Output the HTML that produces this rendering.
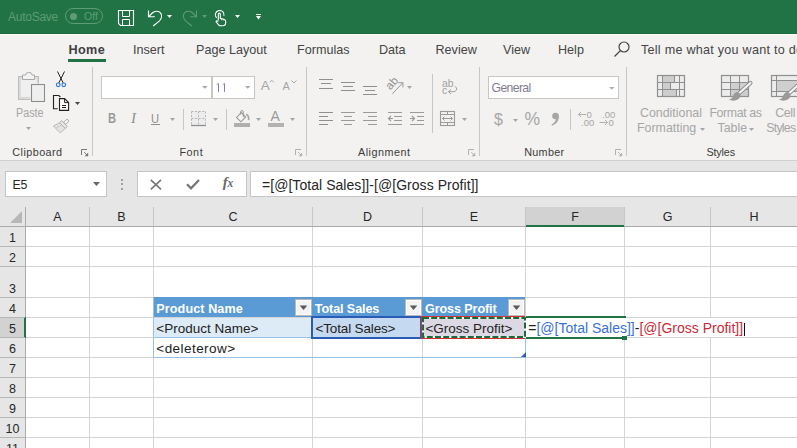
<!DOCTYPE html>
<html><head><meta charset="utf-8"><style>
html,body{margin:0;padding:0;width:797px;height:448px;overflow:hidden;background:#fff}
body{position:relative;font-family:'Liberation Sans', sans-serif}
.t{position:absolute;white-space:nowrap;font-family:'Liberation Sans', sans-serif}
svg{overflow:visible}
</style></head><body>
<div style="position:absolute;left:0px;top:0px;width:797px;height:33px;background:#217346"></div>
<div style="position:absolute;left:0px;top:33px;width:797px;height:1px;background:#1d6a3f"></div>
<div style="position:absolute;left:0px;top:34px;width:797px;height:1px;background:#fbfbfa"></div>
<div class="t" style="left:8px;top:10.84px;font-size:12px;line-height:12px;color:#5f9b75;font-weight:normal;letter-spacing:-0.25px;">AutoSave</div>
<div style="position:absolute;left:65px;top:8px;width:38px;height:16px;border:1px solid #5f9b75;border-radius:9px;box-sizing:border-box"></div>
<div style="position:absolute;left:69.5px;top:12.7px;width:7px;height:7px;border-radius:50%;background:#5f9b75"></div>
<div class="t" style="left:84px;top:10.91px;font-size:10.5px;line-height:10.5px;color:#5f9b75;font-weight:normal;letter-spacing:0px;">Off</div>
<svg style="position:absolute;left:117px;top:9px;" width="18" height="18" viewBox="0 0 18 18"><path d="M1.5 1.5H16.5V16.5H3.5L1.5 14.5Z" fill="none" stroke="#fff" stroke-width="1.1"/><path d="M5.5 1.5V7.5H12.5V1.5" fill="none" stroke="#fff" stroke-width="1"/><path d="M5.5 16.5V10.5H12.5V16.5" fill="none" stroke="#fff" stroke-width="1"/></svg>
<svg style="position:absolute;left:146px;top:9px;" width="18" height="18" viewBox="0 0 18 18"><path d="M2.5 1.5V7.8H8.8" fill="none" stroke="#fff" stroke-width="1.1"/><path d="M2.5 7.8L6.2 4Q9 1.4 12.5 2.6Q16 4.2 15.5 8Q15.2 10 13.5 11.8L7.2 17" fill="none" stroke="#fff" stroke-width="1.1"/></svg>
<svg style="position:absolute;left:167.0px;top:15px;" width="5" height="3" viewBox="0 0 5 3"><path d="M0 0H5L2.5 3Z" fill="#fff"/></svg>
<svg style="position:absolute;left:181px;top:9px;" width="18" height="18" viewBox="0 0 18 18"><path d="M15.5 1.5V7.8H9.2" fill="none" stroke="#5f9b75" stroke-width="1.1"/><path d="M15.5 7.8L11.8 4Q9 1.4 5.5 2.6Q2 4.2 2.5 8Q2.8 10 4.5 11.8L10.8 17" fill="none" stroke="#5f9b75" stroke-width="1.1"/></svg>
<svg style="position:absolute;left:202.0px;top:15px;" width="5" height="3" viewBox="0 0 5 3"><path d="M0 0H5L2.5 3Z" fill="#5f9b75"/></svg>
<svg style="position:absolute;left:213px;top:9px;" width="16" height="18" viewBox="0 0 16 18"><path d="M3.6 8.9A4.35 4.35 0 1 1 10.9 6.9" fill="none" stroke="#fff" stroke-width="1.1"/><path d="M5.3 11.5V5.3Q5.3 4.1 6.3 4.1Q7.3 4.1 7.3 5.3V9.3L10.8 10.2Q12.7 10.8 12.7 12.6V13.5Q12.7 16.8 9.5 16.8H7.8Q6.5 16.8 5.6 15.8L3.2 12.9Q2.8 12 3.8 11.8L5.3 12.6" fill="#217346" stroke="#fff" stroke-width="1.1"/><path d="M8.6 9.8V11.3M10.3 10.3V11.5" stroke="#fff" stroke-width="0.8"/></svg>
<svg style="position:absolute;left:235.0px;top:15px;" width="5" height="3" viewBox="0 0 5 3"><path d="M0 0H5L2.5 3Z" fill="#fff"/></svg>
<div style="position:absolute;left:256px;top:14px;width:5px;height:1px;background:#fff"></div>
<svg style="position:absolute;left:256.0px;top:16px;" width="5" height="3.5" viewBox="0 0 5 3.5"><path d="M0 0H5L2.5 3.5Z" fill="#fff"/></svg>
<div style="position:absolute;left:0px;top:35px;width:797px;height:125px;background:#f3f2f1"></div>
<div style="position:absolute;left:0px;top:160px;width:797px;height:1px;background:#d2d0ce"></div>
<div class="t" style="left:68.5px;top:43.93px;font-size:12.6px;line-height:12.6px;color:#3f3f3f;font-weight:bold;letter-spacing:0.4px;">Home</div>
<div class="t" style="left:133px;top:43.93px;font-size:12.6px;line-height:12.6px;color:#444;font-weight:normal;letter-spacing:0px;">Insert</div>
<div class="t" style="left:196px;top:43.93px;font-size:12.6px;line-height:12.6px;color:#444;font-weight:normal;letter-spacing:0px;">Page Layout</div>
<div class="t" style="left:297px;top:43.93px;font-size:12.6px;line-height:12.6px;color:#444;font-weight:normal;letter-spacing:0px;">Formulas</div>
<div class="t" style="left:379px;top:43.93px;font-size:12.6px;line-height:12.6px;color:#444;font-weight:normal;letter-spacing:0px;">Data</div>
<div class="t" style="left:435.5px;top:43.93px;font-size:12.6px;line-height:12.6px;color:#444;font-weight:normal;letter-spacing:0px;">Review</div>
<div class="t" style="left:503px;top:43.93px;font-size:12.6px;line-height:12.6px;color:#444;font-weight:normal;letter-spacing:0px;">View</div>
<div class="t" style="left:558px;top:43.93px;font-size:12.6px;line-height:12.6px;color:#444;font-weight:normal;letter-spacing:0px;">Help</div>
<div style="position:absolute;left:68px;top:59px;width:38px;height:3px;background:#217346"></div>
<svg style="position:absolute;left:612px;top:40px;" width="20" height="20" viewBox="0 0 20 20"><circle cx="12" cy="7" r="5" fill="none" stroke="#444" stroke-width="1.2"/><path d="M8.4 10.6L2.5 16.5" stroke="#444" stroke-width="1.3"/></svg>
<div class="t" style="left:641px;top:43.93px;font-size:12.6px;line-height:12.6px;color:#444;font-weight:normal;letter-spacing:0.25px;">Tell me what you want to do</div>
<div style="position:absolute;left:92px;top:67px;width:1px;height:89px;background:#c8c6c4"></div>
<div style="position:absolute;left:306px;top:67px;width:1px;height:89px;background:#c8c6c4"></div>
<div style="position:absolute;left:479px;top:67px;width:1px;height:89px;background:#c8c6c4"></div>
<div style="position:absolute;left:626px;top:67px;width:1px;height:89px;background:#c8c6c4"></div>
<div class="t" style="left:12.3px;top:146.76px;font-size:10.8px;line-height:10.8px;color:#3b3a39;font-weight:normal;letter-spacing:0.45px;">Clipboard</div>
<div class="t" style="left:179.4px;top:146.76px;font-size:10.8px;line-height:10.8px;color:#3b3a39;font-weight:normal;letter-spacing:0.55px;">Font</div>
<div class="t" style="left:358px;top:146.76px;font-size:10.8px;line-height:10.8px;color:#3b3a39;font-weight:normal;letter-spacing:0.5px;">Alignment</div>
<div class="t" style="left:524.2px;top:146.76px;font-size:10.8px;line-height:10.8px;color:#3b3a39;font-weight:normal;letter-spacing:0.3px;">Number</div>
<div class="t" style="left:706.4px;top:146.76px;font-size:10.8px;line-height:10.8px;color:#3b3a39;font-weight:normal;letter-spacing:-0.15px;">Styles</div>
<svg style="position:absolute;left:81px;top:149px;" width="8" height="8" viewBox="0 0 8 8"><path d="M0.5 6V0.5H6" fill="none" stroke="#777" stroke-width="1"/><path d="M3.2 3.2L6 6" stroke="#777" stroke-width="1"/><path d="M7.2 3.6V7.2H3.6Z" fill="#777"/></svg>
<svg style="position:absolute;left:294.5px;top:149px;" width="8" height="8" viewBox="0 0 8 8"><path d="M0.5 6V0.5H6" fill="none" stroke="#b0b0b0" stroke-width="1"/><path d="M3.2 3.2L6 6" stroke="#b0b0b0" stroke-width="1"/><path d="M7.2 3.6V7.2H3.6Z" fill="#b0b0b0"/></svg>
<svg style="position:absolute;left:467.5px;top:149px;" width="8" height="8" viewBox="0 0 8 8"><path d="M0.5 6V0.5H6" fill="none" stroke="#b0b0b0" stroke-width="1"/><path d="M3.2 3.2L6 6" stroke="#b0b0b0" stroke-width="1"/><path d="M7.2 3.6V7.2H3.6Z" fill="#b0b0b0"/></svg>
<svg style="position:absolute;left:614.5px;top:149px;" width="8" height="8" viewBox="0 0 8 8"><path d="M0.5 6V0.5H6" fill="none" stroke="#b0b0b0" stroke-width="1"/><path d="M3.2 3.2L6 6" stroke="#b0b0b0" stroke-width="1"/><path d="M7.2 3.6V7.2H3.6Z" fill="#b0b0b0"/></svg>
<svg style="position:absolute;left:17px;top:71px;" width="30" height="32" viewBox="0 0 30 32"><rect x="1.5" y="5.5" width="20" height="23" fill="#d9d9d9" stroke="#bdbdbd"/><rect x="3.7" y="7.5" width="15.9" height="18.4" fill="#efefef"/><path d="M5.5 8.5V4H8.6Q9 1.3 11.8 1.3Q14.6 1.3 15 4H17.5V8.5Z" fill="#f2f2f2" stroke="#a8a8a8"/><rect x="13.5" y="12.5" width="15" height="19" fill="#fafafa"/><rect x="14.5" y="13.5" width="13" height="17" fill="#efefef" stroke="#8c8c8c" stroke-width="1.1"/></svg>
<div class="t" style="left:15.8px;top:106.72px;font-size:12.5px;line-height:12.5px;color:#a6a6a6;font-weight:normal;letter-spacing:0px;transform:scaleX(0.86);transform-origin:0 0;">Paste</div>
<svg style="position:absolute;left:26.0px;top:127px;" width="5" height="3" viewBox="0 0 5 3"><path d="M0 0H5L2.5 3Z" fill="#a6a6a6"/></svg>
<svg style="position:absolute;left:55px;top:70px;" width="12" height="18" viewBox="0 0 12 18"><path d="M2.5 1.5L8.2 13M9.5 1.5L3.8 13" stroke="#222" stroke-width="1" fill="none"/><circle cx="3.2" cy="14.8" r="1.8" fill="none" stroke="#2b7cd3" stroke-width="1.2"/><circle cx="8.8" cy="14.8" r="1.8" fill="none" stroke="#2b7cd3" stroke-width="1.2"/></svg>
<svg style="position:absolute;left:52px;top:94px;" width="19" height="18" viewBox="0 0 19 18"><path d="M6.8 1.5H1.5V14.7H5.8M6.8 1.5L8.4 3.1" fill="none" stroke="#222" stroke-width="1.1"/><path d="M7.5 4.6H12.6L16.6 8.6V16.4H7.5Z" fill="#fff" stroke="#222" stroke-width="1.1"/><path d="M12.6 4.6V8.6H16.6" fill="none" stroke="#222" stroke-width="1"/><path d="M10 11.5H14M10 13.5H14" stroke="#222" stroke-width="1"/></svg>
<svg style="position:absolute;left:75.0px;top:102.2px;" width="5" height="3" viewBox="0 0 5 3"><path d="M0 0H5L2.5 3Z" fill="#444"/></svg>
<svg style="position:absolute;left:50px;top:116px;" width="22" height="20" viewBox="0 0 22 20"><g transform="translate(12.5 9.5) rotate(45)"><rect x="-1.5" y="-8" width="3" height="5.2" rx="1.5" fill="#f4f4f4" stroke="#a6a6a6" stroke-width="0.9"/><rect x="-4" y="-2.8" width="8" height="2.8" fill="#e8e8e8" stroke="#a6a6a6" stroke-width="0.9"/><path d="M-4 0.2H4L3.6 6.8L-6.1 6.8Z" fill="#e4e4e4" stroke="#b4b4b4" stroke-width="0.9"/><path d="M-1 0.5L-3 6.5" stroke="#c4c4c4" stroke-width="0.8"/></g></svg>
<div style="position:absolute;left:101px;top:76px;width:111px;height:23px;background:#fff;border:1px solid #c8c6c4;box-sizing:border-box"></div>
<div style="position:absolute;left:212px;top:76px;width:43px;height:23px;background:#fff;border:1px solid #c8c6c4;box-sizing:border-box"></div>
<svg style="position:absolute;left:201.85px;top:86.2px;" width="5.5" height="2.8" viewBox="0 0 5.5 2.8"><path d="M0 0H5.5L2.75 2.8Z" fill="#a6a6a6"/></svg>
<svg style="position:absolute;left:244.85px;top:86.2px;" width="5.5" height="2.8" viewBox="0 0 5.5 2.8"><path d="M0 0H5.5L2.75 2.8Z" fill="#a6a6a6"/></svg>
<svg style="position:absolute;left:214px;top:82px;" width="14" height="11" viewBox="0 0 14 11"><path d="M4.5 1.5V9.8M10.5 1.5V9.8" stroke="#9a78a6" stroke-width="1"/><path d="M2.5 2.8L4.5 1.3M8.5 2.8L10.5 1.3" stroke="#a08cb0" stroke-width="0.9"/></svg>
<div class="t" style="left:260.8px;top:79.37px;font-size:13.5px;line-height:13.5px;color:#a6a6a6;font-weight:normal;letter-spacing:0px;">A</div>
<svg style="position:absolute;left:269px;top:79px;" width="6" height="4" viewBox="0 0 6 4"><path d="M0.8 3.3L2.8 1.3L4.8 3.3" fill="none" stroke="#a6a6a6" stroke-width="1"/></svg>
<div class="t" style="left:282.5px;top:81.39px;font-size:11px;line-height:11px;color:#a6a6a6;font-weight:normal;letter-spacing:0px;">A</div>
<svg style="position:absolute;left:290.5px;top:79.5px;" width="6" height="4" viewBox="0 0 6 4"><path d="M0.5 0.5L3 3L5.5 0.5" fill="none" stroke="#a6a6a6" stroke-width="1"/></svg>
<div class="t" style="left:108.2px;top:111.15px;font-size:14px;line-height:14px;color:#999;font-weight:bold;letter-spacing:0px;transform:scaleX(0.8);transform-origin:0 0;">B</div>
<div class="t" style="left:131px;top:111.10px;font-size:15px;line-height:15px;color:#8f8f8f;font-weight:normal;letter-spacing:0px;font-family:'Liberation Serif';font-style:italic;">I</div>
<div class="t" style="left:151.2px;top:112.00px;font-size:13px;line-height:13px;color:#8f8f8f;font-weight:normal;letter-spacing:0px;transform:scaleX(0.86);transform-origin:0 0;">U</div>
<div style="position:absolute;left:150.7px;top:124px;width:9.5px;height:1px;background:#8f8f8f"></div>
<svg style="position:absolute;left:170.0px;top:118px;" width="5" height="3" viewBox="0 0 5 3"><path d="M0 0H5L2.5 3Z" fill="#a6a6a6"/></svg>
<div style="position:absolute;left:183px;top:109px;width:1px;height:21px;background:#c8c6c4"></div>
<svg style="position:absolute;left:190px;top:110px;" width="17" height="17" viewBox="0 0 17 17"><rect x="1.5" y="1.5" width="14" height="14" fill="#ededed"/><path d="M1.5 1.5H15.5M1.5 8.5H15.5M1.5 1.5V15M15.5 1.5V15M8.5 1.5V15" stroke="#b4b4b4" stroke-width="1" stroke-dasharray="2 1.6" fill="none"/><path d="M1 15.5H16" stroke="#8f8f8f" stroke-width="1.3"/></svg>
<svg style="position:absolute;left:213.0px;top:118.3px;" width="5" height="3" viewBox="0 0 5 3"><path d="M0 0H5L2.5 3Z" fill="#a6a6a6"/></svg>
<div style="position:absolute;left:226px;top:109px;width:1px;height:21px;background:#c8c6c4"></div>
<svg style="position:absolute;left:233px;top:109px;" width="19" height="18" viewBox="0 0 19 18"><path d="M3.5 8.4L7.9 12.8L12.7 8L8.3 3.6Z" fill="#f4f4f4" stroke="#9a9a9a" stroke-width="1.1"/><path d="M7.6 5.5V2.8Q7.6 1.6 8.9 1.6Q10.3 1.6 10.3 2.8V8.2" fill="none" stroke="#9a9a9a" stroke-width="1"/><path d="M13.2 5.2Q16.2 6.5 15.6 11.2" fill="none" stroke="#a4a4a4" stroke-width="1.6"/><rect x="1" y="14" width="16" height="4" fill="#b1aeac"/></svg>
<svg style="position:absolute;left:256.0px;top:118.3px;" width="5" height="3" viewBox="0 0 5 3"><path d="M0 0H5L2.5 3Z" fill="#a6a6a6"/></svg>
<div class="t" style="left:270.5px;top:109.15px;font-size:14px;line-height:14px;color:#9a9a9a;font-weight:normal;letter-spacing:0px;">A</div>
<div style="position:absolute;left:268px;top:123px;width:16px;height:4px;background:#b4b2b0"></div>
<svg style="position:absolute;left:290.0px;top:118.3px;" width="5" height="3" viewBox="0 0 5 3"><path d="M0 0H5L2.5 3Z" fill="#a6a6a6"/></svg>
<svg style="position:absolute;left:318px;top:77px;" width="16" height="20" viewBox="0 0 16 20"><path d="M1 2.5H15M3 6.5H13M1 11.5H15" stroke="#8f8f8f" stroke-width="1"/></svg>
<svg style="position:absolute;left:340px;top:80px;" width="16" height="20" viewBox="0 0 16 20"><path d="M1 2.5H15M3 6.5H13M1 10.5H15" stroke="#8f8f8f" stroke-width="1"/></svg>
<svg style="position:absolute;left:362px;top:84px;" width="16" height="20" viewBox="0 0 16 20"><path d="M1 2.5H15M3 6.5H13M1 10.5H15" stroke="#8f8f8f" stroke-width="1"/></svg>
<svg style="position:absolute;left:386px;top:77px;" width="20" height="18" viewBox="0 0 20 18"><text x="0" y="0" font-family="Liberation Sans" font-size="11.5" fill="#8f8f8f" transform="translate(4.6 13.6) rotate(-50)">ab</text><path d="M6.3 16.9L16.9 5.7M12.2 5.7H16.9V10.4" fill="none" stroke="#9a9a9a" stroke-width="1"/></svg>
<svg style="position:absolute;left:407.0px;top:85.8px;" width="5" height="3" viewBox="0 0 5 3"><path d="M0 0H5L2.5 3Z" fill="#a6a6a6"/></svg>
<svg style="position:absolute;left:318px;top:110px;" width="16" height="16" viewBox="0 0 16 16"><path d="M1 2.5H15M1 6.5H10M1 10.5H15M1 14.5H10" stroke="#8f8f8f" stroke-width="1"/></svg>
<svg style="position:absolute;left:340px;top:110px;" width="16" height="16" viewBox="0 0 16 16"><path d="M1 2.5H15M4 6.5H12M1 10.5H15M4 14.5H12" stroke="#9a9a9a" stroke-width="1.1"/></svg>
<svg style="position:absolute;left:362px;top:110px;" width="16" height="16" viewBox="0 0 16 16"><path d="M1 2.5H15M6 6.5H15M1 10.5H15M6 14.5H15" stroke="#9a9a9a" stroke-width="1.1"/></svg>
<svg style="position:absolute;left:387px;top:110px;" width="16" height="16" viewBox="0 0 16 16"><path d="M1 2.5H15M7 6.5H15M7 10.5H15M1 14.5H15M6 8.5H1.5M4 6L1.5 8.5L4 11" fill="none" stroke="#9a9a9a" stroke-width="1.1"/></svg>
<svg style="position:absolute;left:409px;top:110px;" width="16" height="16" viewBox="0 0 16 16"><path d="M1 2.5H15M8 6.5H15M8 10.5H15M1 14.5H15M1 8.5H5.5M3 6L5.5 8.5L3 11" fill="none" stroke="#9a9a9a" stroke-width="1.1"/></svg>
<div style="position:absolute;left:432px;top:74px;width:1px;height:59px;background:#c8c6c4"></div>
<svg style="position:absolute;left:441px;top:78px;" width="18" height="18" viewBox="0 0 18 18"><text x="1" y="8.6" font-family="Liberation Sans" font-size="10.5" fill="#a0a0a0">ab</text><text x="1" y="15.8" font-family="Liberation Sans" font-size="10.5" fill="#a0a0a0">c</text><path d="M14 8.3Q16.5 10 15.5 12Q14.5 13.7 12 13.7H7.5M10 11.3L7.5 13.7L10 16.1" fill="none" stroke="#a0a0a0" stroke-width="1"/></svg>
<svg style="position:absolute;left:439px;top:110px;" width="17" height="17" viewBox="0 0 17 17"><rect x="1.5" y="1.5" width="14" height="14" fill="none" stroke="#9a9a9a" stroke-width="1.1"/><path d="M1.5 4.5H15.5M1.5 12.5H15.5M8.5 1.5V4.5M8.5 12.5V15.5" stroke="#9a9a9a"/><path d="M3.5 8.5H13.5M5.5 6.5L3.5 8.5L5.5 10.5M11.5 6.5L13.5 8.5L11.5 10.5" fill="none" stroke="#9a9a9a"/></svg>
<svg style="position:absolute;left:462.0px;top:118.3px;" width="5" height="3" viewBox="0 0 5 3"><path d="M0 0H5L2.5 3Z" fill="#a6a6a6"/></svg>
<div style="position:absolute;left:488px;top:76px;width:131px;height:23px;background:#fff;border:1px solid #c8c6c4;box-sizing:border-box"></div>
<div class="t" style="left:491.6px;top:82.07px;font-size:12.2px;line-height:12.2px;color:#7f7d90;font-weight:normal;letter-spacing:-0.62px;">General</div>
<svg style="position:absolute;left:608.55px;top:87px;" width="5.5" height="2.8" viewBox="0 0 5.5 2.8"><path d="M0 0H5.5L2.75 2.8Z" fill="#b0b0b0"/></svg>
<div class="t" style="left:494px;top:111.96px;font-size:16px;line-height:16px;color:#a6a6a6;font-weight:normal;letter-spacing:0px;">$</div>
<svg style="position:absolute;left:513.0px;top:118.5px;" width="5" height="3" viewBox="0 0 5 3"><path d="M0 0H5L2.5 3Z" fill="#a6a6a6"/></svg>
<div class="t" style="left:524.5px;top:111.19px;font-size:17.5px;line-height:17.5px;color:#a6a6a6;font-weight:normal;letter-spacing:0px;">%</div>
<svg style="position:absolute;left:549px;top:110px;" width="14" height="18" viewBox="0 0 14 18"><circle cx="6.5" cy="6" r="3.3" fill="#a6a6a6"/><path d="M9.8 6Q10.4 12.5 3 15.8L2.4 14.8Q6.8 12 7 8.5Z" fill="#a6a6a6"/></svg>
<div style="position:absolute;left:570px;top:109px;width:1px;height:21px;background:#c8c6c4"></div>
<svg style="position:absolute;left:577px;top:110px;" width="18" height="17" viewBox="0 0 18 17"><text x="9.5" y="8" font-family="Liberation Sans" font-size="9.5" fill="#a6a6a6">0</text><text x="4" y="16.3" font-family="Liberation Sans" font-size="9.5" fill="#a6a6a6">.00</text><path d="M1.5 4.5H9M4 2L1.5 4.5L4 7" fill="none" stroke="#a6a6a6" stroke-width="0.9"/></svg>
<svg style="position:absolute;left:598px;top:110px;" width="18" height="17" viewBox="0 0 18 17"><text x="4" y="8" font-family="Liberation Sans" font-size="9.5" fill="#a6a6a6">.00</text><text x="10.5" y="16.3" font-family="Liberation Sans" font-size="9.5" fill="#a6a6a6">0</text><path d="M1.5 12.5H9.5M7 10L9.5 12.5L7 15" fill="none" stroke="#a6a6a6" stroke-width="0.9"/></svg>
<svg style="position:absolute;left:656px;top:74px;" width="30" height="24" viewBox="0 0 30 24"><rect x="1.5" y="1.5" width="27" height="21" fill="#ececec"/><rect x="6.5" y="1.5" width="12" height="7" fill="#cdcdcd"/><rect x="6.5" y="8.5" width="8" height="7" fill="#cdcdcd"/><rect x="6.5" y="15.5" width="14" height="7" fill="#cdcdcd"/><path d="M1.5 8.5H28.5M1.5 15.5H28.5M6.5 1.5V22.5M18.5 1.5V8.5M14.5 8.5V15.5M20.5 15.5V22.5M23.5 1.5V22.5" stroke="#8f8f8f" stroke-width="1"/><rect x="1.5" y="1.5" width="27" height="21" fill="none" stroke="#8f8f8f" stroke-width="1.2"/></svg>
<div class="t" style="left:640px;top:106.60px;font-size:12.4px;line-height:12.4px;color:#a6a6a6;font-weight:normal;letter-spacing:0px;">Conditional</div>
<div class="t" style="left:637px;top:122.20px;font-size:12.4px;line-height:12.4px;color:#a6a6a6;font-weight:normal;letter-spacing:0px;">Formatting</div>
<svg style="position:absolute;left:699.5px;top:127.5px;" width="5" height="3" viewBox="0 0 5 3"><path d="M0 0H5L2.5 3Z" fill="#a6a6a6"/></svg>
<svg style="position:absolute;left:720px;top:74px;" width="32" height="28" viewBox="0 0 32 28"><rect x="1.5" y="1.5" width="27" height="21" fill="#ececec"/><rect x="10.5" y="8.5" width="18" height="14" fill="#cfcfcf"/><path d="M1.5 8.5H28.5M1.5 15.5H28.5M10.5 1.5V22.5M19.5 1.5V22.5" stroke="#8f8f8f" stroke-width="1"/><rect x="1.5" y="1.5" width="27" height="21" fill="none" stroke="#8f8f8f" stroke-width="1.2"/><path d="M30.5 8.9L18 20.3" stroke="#8f8f8f" stroke-width="4" stroke-linecap="round"/><path d="M30.5 8.9L18 20.3" stroke="#f6f6f6" stroke-width="2" stroke-linecap="round"/><path d="M19.8 19.2Q21.5 22.5 18.5 25Q14 28 8.5 25.6Q12 25.2 13 22Q14.5 18 17.8 18Z" fill="#9a9a9a"/></svg>
<div class="t" style="left:709.4px;top:106.60px;font-size:12.4px;line-height:12.4px;color:#a6a6a6;font-weight:normal;letter-spacing:-0.4px;">Format as</div>
<div class="t" style="left:717.5px;top:122.20px;font-size:12.4px;line-height:12.4px;color:#a6a6a6;font-weight:normal;letter-spacing:0px;">Table</div>
<svg style="position:absolute;left:748.5px;top:127.5px;" width="5" height="3" viewBox="0 0 5 3"><path d="M0 0H5L2.5 3Z" fill="#a6a6a6"/></svg>
<svg style="position:absolute;left:770px;top:74px;" width="32" height="28" viewBox="0 0 32 28"><rect x="1.5" y="1.5" width="27" height="21" fill="#ececec"/><rect x="6.5" y="6.5" width="22" height="11" fill="#cfcfcf"/><path d="M1.5 6.5H28.5M1.5 17.5H28.5M6.5 1.5V22.5" stroke="#8f8f8f" stroke-width="1"/><rect x="1.5" y="1.5" width="27" height="21" fill="none" stroke="#8f8f8f" stroke-width="1.2"/><path d="M30.5 8.9L18 20.3" stroke="#8f8f8f" stroke-width="4" stroke-linecap="round"/><path d="M30.5 8.9L18 20.3" stroke="#f6f6f6" stroke-width="2" stroke-linecap="round"/><path d="M19.8 19.2Q21.5 22.5 18.5 25Q14 28 8.5 25.6Q12 25.2 13 22Q14.5 18 17.8 18Z" fill="#9a9a9a"/></svg>
<div class="t" style="left:775.3px;top:106.60px;font-size:12.4px;line-height:12.4px;color:#a6a6a6;font-weight:normal;letter-spacing:-0.4px;">Cell</div>
<div class="t" style="left:766.2px;top:122.20px;font-size:12.4px;line-height:12.4px;color:#a6a6a6;font-weight:normal;letter-spacing:-0.75px;">Styles</div>
<div style="position:absolute;left:0px;top:161px;width:797px;height:46px;background:#e6e6e6"></div>
<div style="position:absolute;left:5px;top:171px;width:102px;height:26px;background:#fff;border:1px solid #c6c6c6;box-sizing:border-box"></div>
<div class="t" style="left:12.6px;top:178.89px;font-size:12.3px;line-height:12.3px;color:#262626;font-weight:normal;letter-spacing:-0.3px;">E5</div>
<svg style="position:absolute;left:93.0px;top:181.5px;" width="7" height="4" viewBox="0 0 7 4"><path d="M0 0H7L3.5 4Z" fill="#666"/></svg>
<div style="position:absolute;left:121px;top:178.5px;width:2px;height:2px;background:#a0a0a0"></div>
<div style="position:absolute;left:121px;top:183px;width:2px;height:2px;background:#a0a0a0"></div>
<div style="position:absolute;left:121px;top:187.5px;width:2px;height:2px;background:#a0a0a0"></div>
<div style="position:absolute;left:137px;top:171px;width:110px;height:26px;background:#fff;border:1px solid #c6c6c6;box-sizing:border-box"></div>
<svg style="position:absolute;left:150px;top:179px;" width="12" height="11" viewBox="0 0 12 11"><path d="M0.8 0.8L11 10.3M11 0.8L0.8 10.3" stroke="#777" stroke-width="1.6"/></svg>
<svg style="position:absolute;left:185.5px;top:178.5px;" width="14" height="11" viewBox="0 0 14 11"><path d="M1 5.3L5 9.3L13 1" fill="none" stroke="#777" stroke-width="2.3"/></svg>
<div class="t" style="left:222.8px;top:175.30px;font-size:15px;line-height:15px;color:#6a6a6a;font-weight:bold;letter-spacing:0px;font-family:'Liberation Serif';font-style:italic;">f</div>
<div class="t" style="left:227.5px;top:178.27px;font-size:11.5px;line-height:11.5px;color:#6a6a6a;font-weight:bold;letter-spacing:0px;font-family:'Liberation Serif';font-style:italic;">x</div>
<div style="position:absolute;left:250px;top:171px;width:547px;height:26px;background:#fff;border:1px solid #c6c6c6;border-right:none;box-sizing:border-box"></div>
<div class="t" style="left:262px;top:177.65px;font-size:14px;line-height:14px;color:#262626;font-weight:normal;letter-spacing:0.05px;">=[@[Total Sales]]-[@[Gross Profit]]</div>
<div style="position:absolute;left:0px;top:227px;width:797px;height:221px;background:#fff"></div>
<div style="position:absolute;left:0px;top:207px;width:797px;height:20px;background:#e6e6e6"></div>
<div style="position:absolute;left:526px;top:207px;width:98px;height:19px;background:#d2d2d2"></div>
<div style="position:absolute;left:526px;top:225px;width:98px;height:2px;background:#217346"></div>
<div style="position:absolute;left:0px;top:226px;width:526px;height:1px;background:#ababab"></div>
<div style="position:absolute;left:624px;top:226px;width:173px;height:1px;background:#ababab"></div>
<div style="position:absolute;left:89px;top:207px;width:1px;height:19px;background:#c6c6c6"></div>
<div style="position:absolute;left:153px;top:207px;width:1px;height:19px;background:#c6c6c6"></div>
<div style="position:absolute;left:312px;top:207px;width:1px;height:19px;background:#c6c6c6"></div>
<div style="position:absolute;left:422px;top:207px;width:1px;height:19px;background:#c6c6c6"></div>
<div style="position:absolute;left:525px;top:207px;width:1px;height:19px;background:#c6c6c6"></div>
<div style="position:absolute;left:624px;top:207px;width:1px;height:19px;background:#c6c6c6"></div>
<div style="position:absolute;left:710px;top:207px;width:1px;height:19px;background:#c6c6c6"></div>
<svg style="position:absolute;left:10px;top:211px;" width="13" height="12" viewBox="0 0 13 12"><path d="M12 0V12H0Z" fill="#b8b8b8"/></svg>
<div class="t" style="left:26px;width:63px;top:211.42px;font-size:12.5px;line-height:12.5px;color:#262626;text-align:center">A</div>
<div class="t" style="left:90px;width:63px;top:211.42px;font-size:12.5px;line-height:12.5px;color:#262626;text-align:center">B</div>
<div class="t" style="left:154px;width:158px;top:211.42px;font-size:12.5px;line-height:12.5px;color:#262626;text-align:center">C</div>
<div class="t" style="left:313px;width:109px;top:211.42px;font-size:12.5px;line-height:12.5px;color:#262626;text-align:center">D</div>
<div class="t" style="left:423px;width:102px;top:211.42px;font-size:12.5px;line-height:12.5px;color:#262626;text-align:center">E</div>
<div class="t" style="left:526px;width:98px;top:211.42px;font-size:12.5px;line-height:12.5px;color:#262626;text-align:center">F</div>
<div class="t" style="left:625px;width:85px;top:211.42px;font-size:12.5px;line-height:12.5px;color:#262626;text-align:center">G</div>
<div class="t" style="left:711px;width:86px;top:211.42px;font-size:12.5px;line-height:12.5px;color:#262626;text-align:center">H</div>
<div style="position:absolute;left:0px;top:227px;width:25px;height:221px;background:#e6e6e6"></div>
<div style="position:absolute;left:25px;top:207px;width:1px;height:241px;background:#ababab"></div>
<div style="position:absolute;left:0px;top:318px;width:25px;height:19px;background:#d2d2d2"></div>
<div style="position:absolute;left:24px;top:317px;width:2px;height:21px;background:#217346"></div>
<div style="position:absolute;left:0px;top:246px;width:25px;height:1px;background:#b6b6b6"></div>
<div style="position:absolute;left:26px;top:246px;width:771px;height:1px;background:#d4d4d4"></div>
<div class="t" style="left:0px;width:25px;top:231.82px;font-size:12.5px;line-height:12.5px;color:#262626;text-align:center">1</div>
<div style="position:absolute;left:0px;top:266px;width:25px;height:1px;background:#b6b6b6"></div>
<div style="position:absolute;left:26px;top:266px;width:771px;height:1px;background:#d4d4d4"></div>
<div class="t" style="left:0px;width:25px;top:251.82px;font-size:12.5px;line-height:12.5px;color:#262626;text-align:center">2</div>
<div style="position:absolute;left:0px;top:297px;width:25px;height:1px;background:#b6b6b6"></div>
<div style="position:absolute;left:26px;top:297px;width:771px;height:1px;background:#d4d4d4"></div>
<div class="t" style="left:0px;width:25px;top:282.82px;font-size:12.5px;line-height:12.5px;color:#262626;text-align:center">3</div>
<div style="position:absolute;left:0px;top:317px;width:25px;height:1px;background:#b6b6b6"></div>
<div style="position:absolute;left:26px;top:317px;width:771px;height:1px;background:#d4d4d4"></div>
<div class="t" style="left:0px;width:25px;top:302.82px;font-size:12.5px;line-height:12.5px;color:#262626;text-align:center">4</div>
<div style="position:absolute;left:0px;top:337px;width:25px;height:1px;background:#b6b6b6"></div>
<div style="position:absolute;left:26px;top:337px;width:771px;height:1px;background:#d4d4d4"></div>
<div class="t" style="left:0px;width:25px;top:322.82px;font-size:12.5px;line-height:12.5px;color:#262626;text-align:center">5</div>
<div style="position:absolute;left:0px;top:357px;width:25px;height:1px;background:#b6b6b6"></div>
<div style="position:absolute;left:26px;top:357px;width:771px;height:1px;background:#d4d4d4"></div>
<div class="t" style="left:0px;width:25px;top:342.82px;font-size:12.5px;line-height:12.5px;color:#262626;text-align:center">6</div>
<div style="position:absolute;left:0px;top:377px;width:25px;height:1px;background:#b6b6b6"></div>
<div style="position:absolute;left:26px;top:377px;width:771px;height:1px;background:#d4d4d4"></div>
<div class="t" style="left:0px;width:25px;top:362.82px;font-size:12.5px;line-height:12.5px;color:#262626;text-align:center">7</div>
<div style="position:absolute;left:0px;top:397px;width:25px;height:1px;background:#b6b6b6"></div>
<div style="position:absolute;left:26px;top:397px;width:771px;height:1px;background:#d4d4d4"></div>
<div class="t" style="left:0px;width:25px;top:382.82px;font-size:12.5px;line-height:12.5px;color:#262626;text-align:center">8</div>
<div style="position:absolute;left:0px;top:417px;width:25px;height:1px;background:#b6b6b6"></div>
<div style="position:absolute;left:26px;top:417px;width:771px;height:1px;background:#d4d4d4"></div>
<div class="t" style="left:0px;width:25px;top:402.82px;font-size:12.5px;line-height:12.5px;color:#262626;text-align:center">9</div>
<div style="position:absolute;left:0px;top:437px;width:25px;height:1px;background:#b6b6b6"></div>
<div style="position:absolute;left:26px;top:437px;width:771px;height:1px;background:#d4d4d4"></div>
<div class="t" style="left:0px;width:25px;top:422.82px;font-size:12.5px;line-height:12.5px;color:#262626;text-align:center">10</div>
<div style="position:absolute;left:0px;top:457px;width:25px;height:1px;background:#b6b6b6"></div>
<div style="position:absolute;left:26px;top:457px;width:771px;height:1px;background:#d4d4d4"></div>
<div class="t" style="left:0px;width:25px;top:442.82px;font-size:12.5px;line-height:12.5px;color:#262626;text-align:center">11</div>
<div style="position:absolute;left:89px;top:227px;width:1px;height:221px;background:#d4d4d4"></div>
<div style="position:absolute;left:153px;top:227px;width:1px;height:221px;background:#d4d4d4"></div>
<div style="position:absolute;left:312px;top:227px;width:1px;height:221px;background:#d4d4d4"></div>
<div style="position:absolute;left:422px;top:227px;width:1px;height:221px;background:#d4d4d4"></div>
<div style="position:absolute;left:525px;top:227px;width:1px;height:221px;background:#d4d4d4"></div>
<div style="position:absolute;left:624px;top:227px;width:1px;height:221px;background:#d4d4d4"></div>
<div style="position:absolute;left:710px;top:227px;width:1px;height:221px;background:#d4d4d4"></div>
<div style="position:absolute;left:154px;top:297px;width:371px;height:20px;background:#5b9bd5"></div>
<div style="position:absolute;left:154px;top:318px;width:159px;height:19px;background:#ddebf7"></div>
<div style="position:absolute;left:154px;top:337px;width:371px;height:1px;background:#9bc2e6"></div>
<div style="position:absolute;left:154px;top:357px;width:371px;height:1px;background:#9bc2e6"></div>
<div style="position:absolute;left:153px;top:297px;width:1px;height:61px;background:#9bc2e6"></div>
<div style="position:absolute;left:525px;top:317px;width:1px;height:41px;background:#9bc2e6"></div>
<div class="t" style="left:156.3px;top:303.13px;font-size:12.6px;line-height:12.6px;color:#fff;font-weight:bold;letter-spacing:0.1px;">Product Name</div>
<div class="t" style="left:314.8px;top:303.13px;font-size:12.6px;line-height:12.6px;color:#fff;font-weight:bold;letter-spacing:-0.1px;">Total Sales</div>
<div class="t" style="left:425px;top:303.13px;font-size:12.6px;line-height:12.6px;color:#fff;font-weight:bold;letter-spacing:-0.1px;">Gross Profit</div>
<svg style="position:absolute;left:295px;top:299px;" width="17" height="17" viewBox="0 0 17 17"><rect x="0.5" y="0.5" width="16" height="16" fill="#f3f3f3" stroke="#b8b8b8"/><rect x="1.5" y="1.5" width="14" height="14" fill="none" stroke="#fdfdfd"/><path d="M4.7 6.5H12.3L8.5 11Z" fill="#595959"/></svg>
<svg style="position:absolute;left:405px;top:299px;" width="17" height="17" viewBox="0 0 17 17"><rect x="0.5" y="0.5" width="16" height="16" fill="#f3f3f3" stroke="#b8b8b8"/><rect x="1.5" y="1.5" width="14" height="14" fill="none" stroke="#fdfdfd"/><path d="M4.7 6.5H12.3L8.5 11Z" fill="#595959"/></svg>
<svg style="position:absolute;left:508px;top:299px;" width="17" height="17" viewBox="0 0 17 17"><rect x="0.5" y="0.5" width="16" height="16" fill="#f3f3f3" stroke="#b8b8b8"/><rect x="1.5" y="1.5" width="14" height="14" fill="none" stroke="#fdfdfd"/><path d="M4.7 6.5H12.3L8.5 11Z" fill="#595959"/></svg>
<div style="position:absolute;left:311px;top:316px;width:111px;height:23px;border:2px solid #2a5cb5;box-sizing:border-box;background:#c5d9f0"></div>
<svg style="position:absolute;left:421px;top:316px;" width="105" height="23" viewBox="0 0 105 23"><rect x="1" y="1" width="103" height="21" fill="#dcd9e4"/><path d="M104 0.5H0.5V22.5H104" fill="none" stroke="#d13438" stroke-width="1"/><rect x="2" y="2" width="102" height="19" fill="none" stroke="#fff" stroke-width="2"/><rect x="2" y="2" width="102" height="19" fill="none" stroke="#1a6b36" stroke-width="2" stroke-dasharray="6 2.2"/></svg>
<div style="position:absolute;left:526px;top:318px;width:220px;height:19px;background:#fff"></div>
<div style="position:absolute;left:526px;top:316px;width:100px;height:2px;background:#217346"></div>
<div style="position:absolute;left:526px;top:337px;width:96px;height:2px;background:#217346"></div>
<div style="position:absolute;left:622px;top:336px;width:5px;height:4px;background:#217346"></div>
<div class="t" style="left:156.3px;top:321.57px;font-size:13.5px;line-height:13.5px;color:#222;font-weight:normal;letter-spacing:0px;">&lt;Product Name&gt;</div>
<div class="t" style="left:156.3px;top:341.57px;font-size:13.5px;line-height:13.5px;color:#222;font-weight:normal;letter-spacing:0.45px;">&lt;deleterow&gt;</div>
<div class="t" style="left:315.5px;top:321.57px;font-size:13.5px;line-height:13.5px;color:#222;font-weight:normal;letter-spacing:-0.15px;">&lt;Total Sales&gt;</div>
<div class="t" style="left:425.4px;top:321.57px;font-size:13.5px;line-height:13.5px;color:#222;font-weight:normal;letter-spacing:0px;">&lt;Gross Profit&gt;</div>
<div class="t" style="left:528.3px;top:321.15px;font-size:14px;line-height:14px;color:#222;letter-spacing:0px">=<span style="color:#3b6fd8">[@[Total Sales]]</span>-<span style="color:#cc2a36">[@[Gross Profit]]</span></div>
<div style="position:absolute;left:744px;top:323px;width:1px;height:13px;background:#111"></div>
<svg style="position:absolute;left:521px;top:352px;" width="5" height="5" viewBox="0 0 5 5"><path d="M5 0V5H0Z" fill="#2f5fb3"/></svg>
</body></html>
